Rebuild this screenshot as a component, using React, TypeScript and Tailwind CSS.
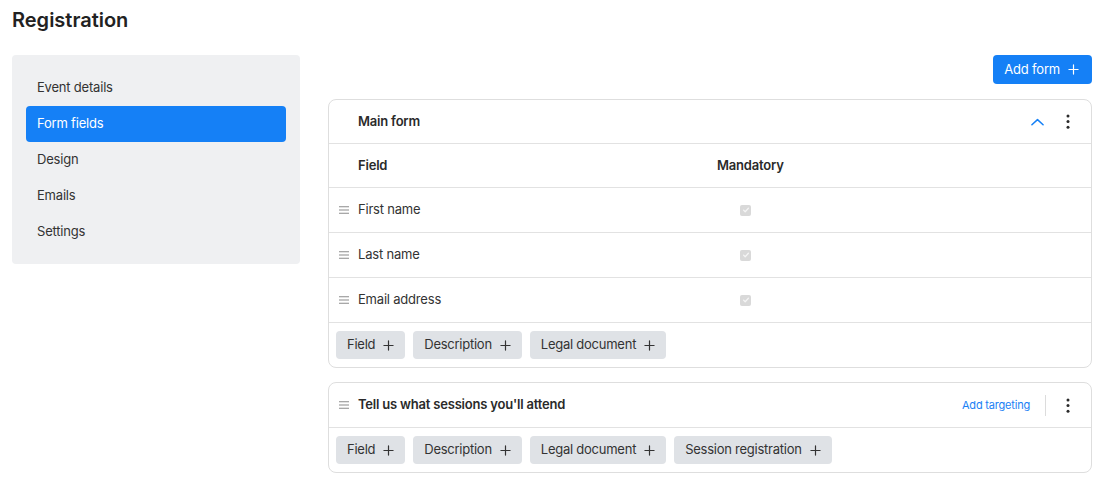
import React from "react";

const font = { fontFamily: 'Inter, "Noto Sans", "Liberation Sans", sans-serif' };

function Plus({ className = "" }: { className?: string }) {
  return (
    <svg viewBox="0 0 12 12" className={`w-[11px] h-[11px] ${className}`} fill="none" stroke="currentColor" strokeWidth="1.3" strokeLinecap="round">
      <path d="M6 1v10M1 6h10" />
    </svg>
  );
}

function Handle() {
  return (
    <svg viewBox="0 0 10 8" className="w-[10px] h-[8px] text-[#8c8c8c]" fill="none" stroke="currentColor" strokeWidth="1.1">
      <path d="M0 0.8h10M0 4h10M0 7.2h10" />
    </svg>
  );
}

function Kebab() {
  return (
    <svg viewBox="0 0 4 16" className="w-[4px] h-[15px] text-[#2a2a2a]" fill="currentColor">
      <circle cx="2" cy="2" r="1.6" />
      <circle cx="2" cy="8" r="1.6" />
      <circle cx="2" cy="14" r="1.6" />
    </svg>
  );
}

function Check() {
  return (
    <div className="w-[11px] h-[11px] rounded-[2px] bg-[#d9d9d9] flex items-center justify-center">
      <svg viewBox="0 0 10 10" className="w-[8px] h-[8px]" fill="none" stroke="#f5f5f5" strokeWidth="1.6" strokeLinecap="round" strokeLinejoin="round">
        <path d="M2 5.2l2 2 4-4.4" />
      </svg>
    </div>
  );
}

function AddButtons({ items }: { items: string[] }) {
  return (
    <div className="flex items-center gap-2 pl-[7px] h-[44px]">
      {items.map((label) => (
        <button key={label} className="h-[28px] flex items-center gap-[8px] pl-[11px] pr-[11px] rounded-[4px] bg-[#dfe2e6] text-[13px] tracking-[-0.25px] text-[#333]">
          {label}
          <Plus className="text-[#333]" />
        </button>
      ))}
    </div>
  );
}

export default function App() {
  const nav = ["Event details", "Form fields", "Design", "Emails", "Settings"];
  const fields = ["First name", "Last name", "Email address"];

  return (
    <div className="min-h-screen bg-white text-[#2d2d2d] pl-3 pr-[10px] tracking-[-0.2px]" style={font}>
      <h1 className="text-[20px] leading-[28px] font-semibold text-[#222] pt-[6px] h-[55px] tracking-normal">Registration</h1>

      <div className="flex gap-[28px] items-start">
        {/* Sidebar */}
        <aside className="w-[288px] shrink-0 bg-[#eff0f2] rounded-[4px] px-[14px] pt-[15px] pb-[14px]">
          {nav.map((item) => (
            <div
              key={item}
              className={`h-[36px] flex items-center pl-[11px] rounded-[4px] text-[13px] ${
                item === "Form fields" ? "bg-[#1580f6] text-white" : "text-[#333]"
              }`}
            >
              {item}
            </div>
          ))}
        </aside>

        {/* Main */}
        <main className="flex-1 flex flex-col">
          <div className="flex justify-end">
            <button className="h-[29px] flex items-center gap-[8px] pl-[11px] pr-[13px] rounded-[4px] bg-[#1580f6] text-white text-[13px] tracking-[-0.2px]">
              Add form
              <Plus />
            </button>
          </div>

          {/* Main form card */}
          <div className="mt-[15px] border border-[#dedede] rounded-[8px]">
            <div className="h-[44px] border-b border-[#e2e2e2] flex items-center pl-[29px] pr-[21px]">
              <span className="text-[13px] font-semibold text-[#2a2a2a]">Main form</span>
              <div className="ml-auto flex items-center gap-[22px]">
                <svg viewBox="0 0 14 8" className="w-[13px] h-[8px] text-[#1580f6]" fill="none" stroke="currentColor" strokeWidth="1.6" strokeLinecap="round" strokeLinejoin="round">
                  <path d="M1 7l6-5.6L13 7" />
                </svg>
                <Kebab />
              </div>
            </div>
            <div className="h-[44px] border-b border-[#e2e2e2] flex items-center text-[13px] font-semibold text-[#2a2a2a]">
              <div className="w-[388px] pl-[29px]">Field</div>
              <div>Mandatory</div>
            </div>
            {fields.map((f) => (
              <div key={f} className="h-[45px] border-b border-[#e2e2e2] flex items-center text-[13px] text-[#333]">
                <div className="w-[29px] flex justify-center pl-[1px]">
                  <Handle />
                </div>
                <div className="w-[359px]">{f}</div>
                <div className="pl-[23px]">
                  <Check />
                </div>
              </div>
            ))}
            <AddButtons items={["Field", "Description", "Legal document"]} />
          </div>

          {/* Sessions card */}
          <div className="mt-[14px] border border-[#dedede] rounded-[8px]">
            <div className="h-[45px] border-b border-[#e2e2e2] flex items-center pr-[21px]">
              <div className="w-[29px] flex justify-center pl-[1px]">
                <Handle />
              </div>
              <span className="text-[13px] font-semibold text-[#2a2a2a]">Tell us what sessions you'll attend</span>
              <div className="ml-auto flex items-center">
                <span className="text-[11px] text-[#1a7ff5]">Add targeting</span>
                <div className="w-px h-[21px] bg-[#dcdcdc] ml-[15px] mr-[20px]" />
                <Kebab />
              </div>
            </div>
            <AddButtons items={["Field", "Description", "Legal document", "Session registration"]} />
          </div>
        </main>
      </div>
    </div>
  );
}
